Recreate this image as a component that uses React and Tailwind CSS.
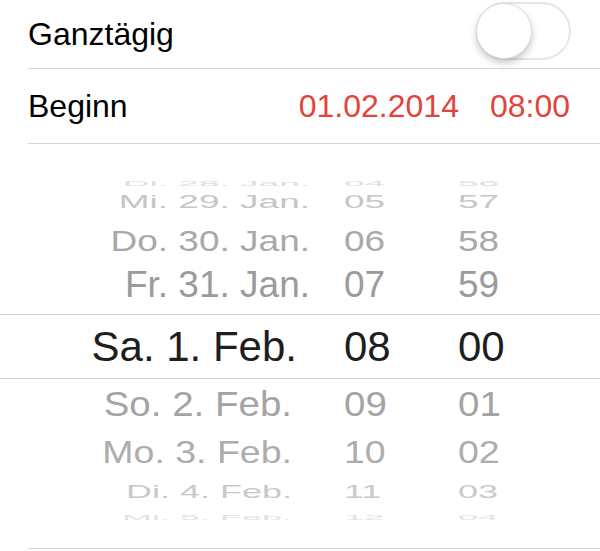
import React from 'react';

const above = [
  { date: 'Di. 28. Jan.', hour: '04', min: '56', h: 'h-[10px]', mt: 'mt-[34px]', size: 'text-[37px]', scale: 'scale-y-[0.2]', color: 'text-[#dedede]' },
  { date: 'Mi. 29. Jan.', hour: '05', min: '57', h: 'h-[13px]', mt: 'mt-[7px]', size: 'text-[37px]', scale: 'scale-y-[0.49]', color: 'text-[#c6c6c6]' },
  { date: 'Do. 30. Jan.', hour: '06', min: '58', h: 'h-[20px]', mt: 'mt-[23px]', size: 'text-[37px]', scale: 'scale-y-[0.79]', color: 'text-[#a9a9a9]' },
  { date: 'Fr. 31. Jan.', hour: '07', min: '59', h: 'h-[20px]', mt: 'mt-[23px]', size: 'text-[37px]', scale: 'scale-y-[0.98]', color: 'text-[#9b9b9b]' },
];

const below = [
  { date: 'So. 2. Feb.', hour: '09', min: '01', h: 'h-[21px]', mt: 'mt-[15px]', size: 'text-[38.5px]', scale: 'scale-y-[0.92]', color: 'text-[#a4a4a4]' },
  { date: 'Mo. 3. Feb.', hour: '10', min: '02', h: 'h-[20px]', mt: 'mt-[28px]', size: 'text-[37.5px]', scale: 'scale-y-[0.84]', color: 'text-[#adadad]' },
  { date: 'Di. 4. Feb.', hour: '11', min: '03', h: 'h-[12px]', mt: 'mt-[23px]', size: 'text-[36px]', scale: 'scale-y-[0.52]', color: 'text-[#c9c9c9]' },
  { date: 'Mi. 5. Feb.', hour: '12', min: '04', h: 'h-[7px]', mt: 'mt-[15px]', size: 'text-[36px]', scale: 'scale-y-[0.22]', color: 'text-[#e2e2e2]' },
];

function WheelRow({ row, datePad }) {
  return (
    <div className={`flex items-center ${row.h} ${row.mt}`}>
      <div className={`flex w-full items-center leading-none ${row.size} ${row.scale} ${row.color}`}>
        <span className={`w-[344px] text-right whitespace-nowrap ${datePad}`}>{row.date}</span>
        <span className="w-[114px]">{row.hour}</span>
        <span>{row.min}</span>
      </div>
    </div>
  );
}

function Toggle() {
  return (
    <div className="relative w-[95px] h-[58px] rounded-full border-2 border-[#e6e6e6] bg-white self-start mt-[2px]">
      <div className="absolute left-[-2px] top-[-1px] w-[56px] h-[56px] rounded-full bg-white border border-[#dcdcdc] shadow-[0_4px_7px_rgba(0,0,0,0.22)]" />
    </div>
  );
}

export default function App() {
  return (
    <div className="w-[600px] h-[551px] bg-white overflow-hidden text-black font-['Liberation_Sans','Helvetica_Neue',Arial,sans-serif]">
      <div className="ml-[28px] h-[69px] border-b border-[#d4d4d7] flex items-center justify-between pr-[29px]">
        <span className="text-[32px] leading-none">Ganztägig</span>
        <Toggle />
      </div>
      <div className="ml-[28px] h-[75px] border-b border-[#d4d4d7] flex items-center justify-between pr-[30px]">
        <span className="text-[32px] leading-none">Beginn</span>
        <div className="flex gap-[31px] text-[32px] leading-none text-[#e2433b]">
          <span>01.02.2014</span>
          <span>08:00</span>
        </div>
      </div>

      <div className="h-[404px] flex flex-col">
        {above.map((row) => (
          <WheelRow key={row.date} row={row} datePad="pr-[34px]" />
        ))}

        <div className="mt-[20px] h-[65px] border-y border-[#d4d4d7] flex items-center">
          <div className="flex w-full items-center leading-none text-[42px] text-[#1e1e1e]">
            <span className="w-[344px] pr-[47px] text-right whitespace-nowrap">Sa. 1. Feb.</span>
            <span className="w-[114px]">08</span>
            <span>00</span>
          </div>
        </div>

        {below.map((row) => (
          <WheelRow key={row.date} row={row} datePad="pr-[52px]" />
        ))}
      </div>

      <div className="ml-[28px] border-b border-[#d4d4d7]" />
    </div>
  );
}
